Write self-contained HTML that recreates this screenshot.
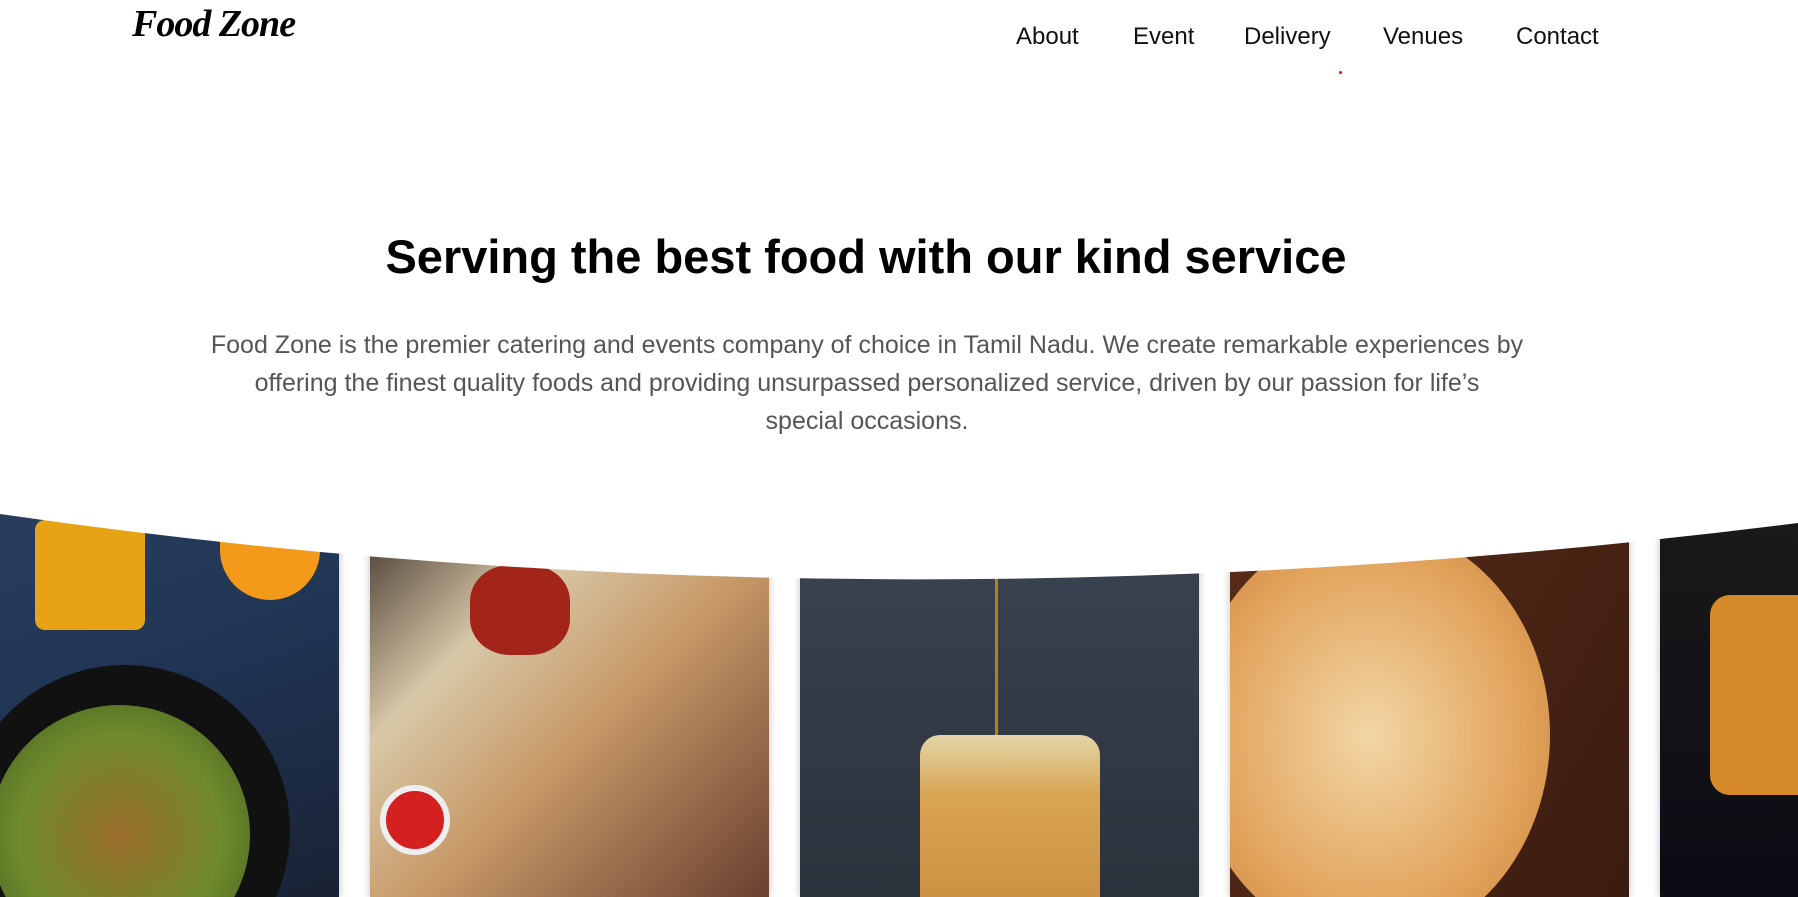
<!DOCTYPE html>
<html><head><meta charset="utf-8">
<style>
*{margin:0;padding:0;box-sizing:border-box}
html,body{width:1798px;height:897px;overflow:hidden}
body{background:#fff;font-family:"Liberation Sans",sans-serif;position:relative}
.logo{position:absolute;z-index:5;left:132px;top:2px;font-family:"Liberation Serif",serif;font-style:italic;font-weight:bold;font-size:38px;color:#000;letter-spacing:-1px}
.nav a{position:absolute;z-index:5;top:23px;font-size:24px;color:#111;text-decoration:none}
.dot{position:absolute;z-index:5;left:1339px;top:71px;width:3px;height:3px;border-radius:50%;background:red}
h1{position:absolute;z-index:5;left:0;width:1732px;top:229px;text-align:center;font-size:47px;font-weight:bold;color:#000}
p{position:absolute;z-index:5;left:167px;width:1400px;top:326px;text-align:center;font-size:25px;line-height:38px;color:#555;white-space:nowrap}
.card{position:absolute;top:505px;height:392px;width:399px;box-shadow:0 0 8px rgba(0,0,0,.25);overflow:hidden}
.curve{position:absolute;left:0;top:0;z-index:2}
</style></head><body>
<div class="logo">Food Zone</div>
<div class="nav"><a style="left:1016px">About</a><a style="left:1133px">Event</a><a style="left:1244px">Delivery</a><a style="left:1383px">Venues</a><a style="left:1516px">Contact</a></div>
<div class="dot"></div>
<h1>Serving the best food with our kind service</h1>
<p>Food Zone is the premier catering and events company of choice in Tamil Nadu. We create remarkable experiences by<br>offering the finest quality foods and providing unsurpassed personalized service, driven by our passion for life’s<br>special occasions.</p>

<div class="card" style="left:-60px;background:linear-gradient(160deg,#2a3e5e,#1f3352 50%,#1a2234)">
 <div style="position:absolute;left:95px;top:15px;width:110px;height:110px;border-radius:10px;background:#e8a215"></div>
 <div style="position:absolute;left:280px;top:35px;width:100px;height:60px;border-radius:0 0 60px 60px;background:#f39a1a"></div>
 <div style="position:absolute;left:20px;top:160px;width:330px;height:330px;border-radius:50%;background:#111"></div>
 <div style="position:absolute;left:50px;top:200px;width:260px;height:260px;border-radius:50%;background:radial-gradient(#9a6d2a,#6f8a2c 55%,#3c5a1d)"></div>
</div>
<div class="card" style="left:370px;background:linear-gradient(135deg,#3a2e28,#d8c8a8 30%,#c89a68 55%,#6a4030)">
 <div style="position:absolute;left:100px;top:60px;width:100px;height:90px;border-radius:40%;background:#a3251a"></div>
 <div style="position:absolute;left:10px;top:280px;width:70px;height:70px;border-radius:50%;background:#d42020;border:6px solid #eee"></div>
</div>
<div class="card" style="left:800px;background:linear-gradient(#3c4452,#2c323c)">
 <div style="position:absolute;left:120px;top:230px;width:180px;height:200px;border-radius:20px;background:linear-gradient(#e2d5a8,#d9a554 30%,#c88a3e)"></div>
 <div style="position:absolute;left:195px;top:0;width:3px;height:230px;background:#b0821c"></div>
</div>
<div class="card" style="left:1230px;background:linear-gradient(120deg,#5a2c18,#3a1c10)">
 <div style="position:absolute;left:-40px;top:20px;width:360px;height:420px;border-radius:50%;background:radial-gradient(#f2d6a6,#e2a45c 60%,#c57b35)"></div>
</div>
<div class="card" style="left:1660px;background:linear-gradient(#1a1a1a,#0b0b14)">
 <div style="position:absolute;left:50px;top:90px;width:120px;height:200px;border-radius:20px;background:#d68a2a"></div>
</div>

<svg class="curve" width="1798" height="897"><path d="M0,0 H1798 V523 Q870,640 0,514 Z" fill="#fff"/></svg>
</body></html>
